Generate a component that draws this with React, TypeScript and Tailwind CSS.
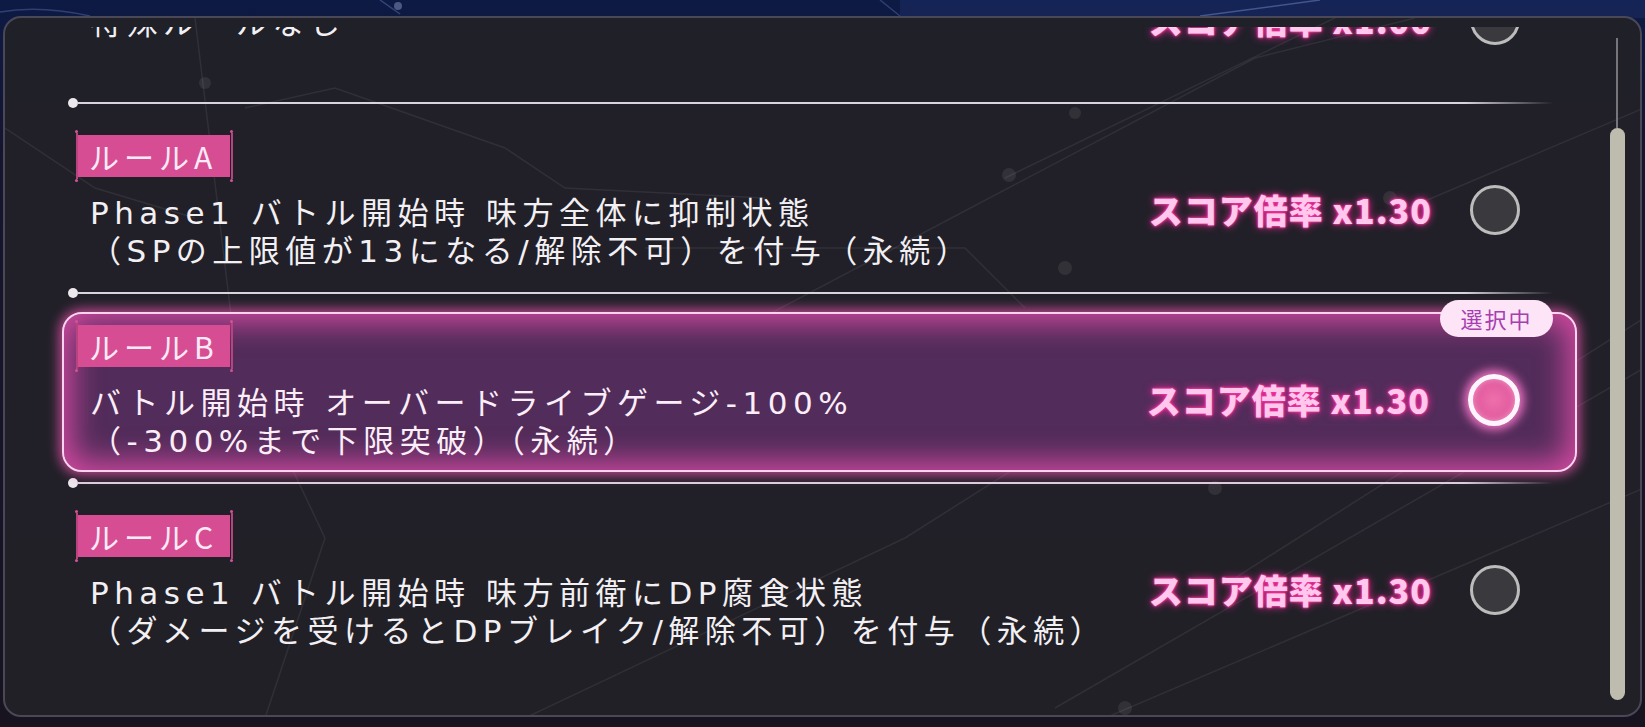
import React from "react";

type Row = { label?: string; lines: string[]; score: string; selected?: boolean };

const rows: Row[] = [
  { lines: ["特殊ルールなし"], score: "スコア倍率 x1.00" },
  {
    label: "ルールA",
    lines: ["Phase1 バトル開始時 味方全体に抑制状態", "（SPの上限値が13になる/解除不可）を付与（永続）"],
    score: "スコア倍率 x1.30",
  },
  {
    label: "ルールB",
    lines: ["バトル開始時 オーバードライブゲージ-100%", "（-300%まで下限突破）（永続）"],
    score: "スコア倍率 x1.30",
    selected: true,
  },
  {
    label: "ルールC",
    lines: ["Phase1 バトル開始時 味方前衛にDP腐食状態", "（ダメージを受けるとDPブレイク/解除不可）を付与（永続）"],
    score: "スコア倍率 x1.30",
  },
];

function Bracket() {
  return (
    <div className="flex w-[3px] flex-col items-center">
      <div className="h-[3px] w-[3px] rounded-full bg-[#cf5596]" />
      <div className="w-[2px] flex-1 bg-[#b8437f]" />
      <div className="h-[3px] w-[3px] rounded-full bg-[#cf5596]" />
    </div>
  );
}

function Label({ text }: { text: string }) {
  return (
    <div className="flex h-[52px] w-fit items-stretch">
      <Bracket />
      <div className="my-[5px] flex w-[152px] items-center bg-[#d64d93] pl-[11px] text-[30px] leading-none tracking-[5px] text-[#ffeaf6]">
        {text}
      </div>
      <Bracket />
    </div>
  );
}

function Radio({ on }: { on?: boolean }) {
  return on ? (
    <div className="h-[52px] w-[52px] rounded-full border-[5px] border-[#fff4fb] bg-[radial-gradient(circle,#ee6fab_0%,#db5097_100%)] shadow-[0_0_10px_4px_rgba(255,120,205,0.9),inset_0_0_6px_rgba(255,200,235,0.6)]" />
  ) : (
    <div className="h-[50px] w-[50px] rounded-full border-[3px] border-[#bdbcbc] bg-[#3a393d]" />
  );
}

function Divider() {
  return (
    <div className="flex h-[2px] w-[1515px] shrink-0 items-center pl-[6px] pr-[24px]">
      <div className="h-[10px] w-[10px] shrink-0 rounded-full bg-[#ece8ee]" />
      <div className="h-[2px] flex-1 bg-[linear-gradient(90deg,#d8d4dc_0%,#d8d4dc_94%,rgba(216,212,220,0)_100%)]" />
    </div>
  );
}

function RuleRow({ row, first }: { row: Row; first?: boolean }) {
  const sel = row.selected;
  return (
    <div
      className={`relative mb-[10px] flex h-[160px] w-[1515px] shrink-0 rounded-[20px] border-2 ${
        first ? "" : "mt-[18px]"
      } ${
        sel
          ? "border-[#ffd3f0] bg-[#522c5a] shadow-[0_0_12px_3px_rgba(255,90,190,0.7),inset_0_0_30px_8px_rgba(225,76,168,0.9)]"
          : "border-transparent"
      }`}
    >
      <div className="flex flex-1 flex-col pl-[11px] pt-[6px]">
        {row.label ? <Label text={row.label} /> : <div className="h-[52px]" />}
        <div
          className={`mt-[12px] whitespace-pre pl-[15px] font-['DejaVu_Sans','Noto_Sans_CJK_JP',sans-serif] text-[31px] leading-[38px] tracking-[5.5px] ${
            sel ? "text-[#fbeef8]" : "text-[#f3f0f4]"
          }`}
        >
          {row.lines.map((l, i) => (
            <div key={i}>{l}</div>
          ))}
        </div>
      </div>
      <div className="mr-[55px] mt-[61px] flex h-[50px] items-center gap-[38px]">
        <span className="whitespace-pre text-[34px] font-black leading-[50px] tracking-[1px] text-[#ffc8ec] [text-shadow:0_0_2px_#ff3aa6,0_0_3px_#ff3aa6,0_0_8px_#ff2d9e]">
          {row.score}
        </span>
        <Radio on={sel} />
      </div>
      {sel && (
        <div className="absolute right-[22px] top-[-14px] flex h-[37px] w-[113px] items-center justify-center rounded-full bg-[#fde5f7] text-[22px] tracking-[2px] text-[#a63fb0]">
          選択中
        </div>
      )}
    </div>
  );
}

export default function App() {
  return (
    <div className="relative h-[727px] w-[1645px] overflow-hidden bg-[linear-gradient(180deg,#0d1a44_0%,#151530_20%,#17141f_100%)] pb-[10px] pl-[3px] pr-[3px] pt-[16px] font-['Noto_Sans_CJK_JP','Noto_Sans',sans-serif]">
      <svg className="pointer-events-none absolute inset-0" width="1645" height="727">
        <rect x="900" y="0" width="745" height="18" fill="#1a2b62" fillOpacity="0.6" />
        <path d="M1200 16 L1320 0" stroke="#6f86c8" strokeOpacity="0.5" strokeWidth="1.5" fill="none" />
        <path d="M380 0 L400 14" stroke="#6f86c8" strokeOpacity="0.4" strokeWidth="1.5" fill="none" />
        <path d="M0 12 Q40 5 90 16" stroke="#6f86c8" strokeOpacity="0.35" strokeWidth="1.5" fill="none" />
        <path d="M880 0 L900 16" stroke="#6f86c8" strokeOpacity="0.35" strokeWidth="1.5" fill="none" />
        <circle cx="398" cy="6" r="4" fill="#8a97c0" fillOpacity="0.5" />
      </svg>
      <div className="relative flex h-full overflow-hidden rounded-[18px] border-2 border-[#4a4757] bg-[#222128]/95">
        <svg className="pointer-events-none absolute inset-0" width="1639" height="701">
          <g stroke="#ffffff" strokeOpacity="0.07" strokeWidth="1.5" fill="none">
            <path d="M190 0 L230 330 L320 520 L260 700" />
            <path d="M0 110 L90 170 L190 200" />
            <path d="M240 90 L330 70 L500 130 L560 170 L760 180" />
            <path d="M640 230 L960 230 L1020 290" />
            <path d="M700 330 L1250 40 L1410 0" />
            <path d="M1000 160 L1639 -150" />
            <path d="M1050 690 L1639 350" />
            <path d="M1100 700 L1639 470" />
            <path d="M520 700 L900 520 L1200 330" />
            <path d="M1380 200 L1639 90" />
            <path d="M1230 560 L1639 300" />
          </g>
          <g fill="#ffffff" fillOpacity="0.08">
            <circle cx="1004" cy="157" r="7" />
            <circle cx="1385" cy="180" r="7" />
            <circle cx="1210" cy="470" r="7" />
            <circle cx="1120" cy="690" r="7" />
            <circle cx="1060" cy="250" r="7" />
            <circle cx="200" cy="65" r="6" />
            <circle cx="1070" cy="95" r="6" />
          </g>
        </svg>
        <div className="relative mb-[2px] mt-[9px] flex-1 overflow-hidden">
          <div className="mt-[-95px] flex flex-col pl-[57px]">
            <RuleRow row={rows[0]} first />
            <Divider />
            <RuleRow row={rows[1]} />
            <Divider />
            <RuleRow row={rows[2]} />
            <Divider />
            <RuleRow row={rows[3]} />
          </div>
        </div>
        <div className="relative mr-[15px] flex w-[16px] flex-col items-center pb-[15px] pt-[20px]">
          <div className="h-[90px] w-[2px] bg-[#77757c]" />
          <div className="w-[15px] flex-1 rounded-full bg-[#bebcae]" />
        </div>
      </div>
    </div>
  );
}
